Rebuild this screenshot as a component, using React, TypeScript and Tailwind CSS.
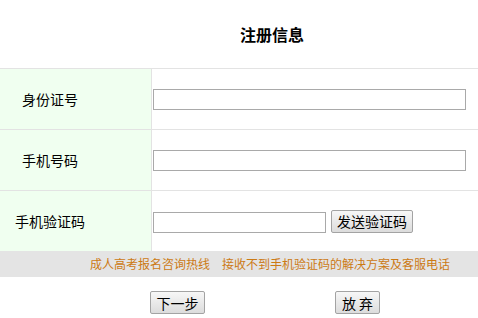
import React from 'react';

const font = { fontFamily: '"Noto Sans CJK SC", "Microsoft YaHei", sans-serif' };

function Row({ label, children }: { label: string; children: React.ReactNode }) {
    return (
        <div className="flex h-[61px] border-t border-[#e3e3e3]">
            <div className="flex w-[152px] shrink-0 items-center border-r border-[#e3e3e3] bg-[#f0fff0]">
                <span className="w-[100px] text-center text-[14px] leading-none text-black">{label}</span>
            </div>
            <div className="flex flex-1 items-center pl-px">{children}</div>
        </div>
    );
}

const btn =
    'h-[23px] border border-[#a3a3a3] rounded-[2px] bg-gradient-to-b from-[#f7f7f7] to-[#dcdcdc] text-[13px] leading-none text-black';

export default function App() {
    return (
        <div className="w-[478px] h-[318px] overflow-hidden bg-white" style={font}>
            <div className="flex h-[68px] items-center pl-[240px]">
                <h1 className="text-[16px] font-bold leading-none text-black">注册信息</h1>
            </div>

            <Row label="身份证号">
                <input className="h-[21px] w-[313px] border border-[#a9a9a9] bg-white outline-none" />
            </Row>
            <Row label="手机号码">
                <input className="h-[21px] w-[313px] border border-[#a9a9a9] bg-white outline-none" />
            </Row>
            <Row label="手机验证码">
                <div className="flex items-end gap-[5px]">
                    <input className="h-[21px] w-[173px] border border-[#a9a9a9] bg-white outline-none" />
                    <button className={`${btn} w-[82px] text-[14px]`}>发送验证码</button>
                </div>
            </Row>

            <div className="flex h-[26px] items-center bg-[#e4e4e4] pl-[90px] text-[12px] leading-none text-[#cc7a14]">
                <span>成人高考报名咨询热线</span>
                <span className="ml-[12px]">接收不到手机验证码的解决方案及客服电话</span>
            </div>

            <div className="flex pt-[14px]">
                <button className={`${btn} ml-[150px] w-[55px] text-[14px]`}>下一步</button>
                <button className={`${btn} ml-[130px] w-[45px] text-[14px]`}>放 弃</button>
            </div>
        </div>
    );
}
